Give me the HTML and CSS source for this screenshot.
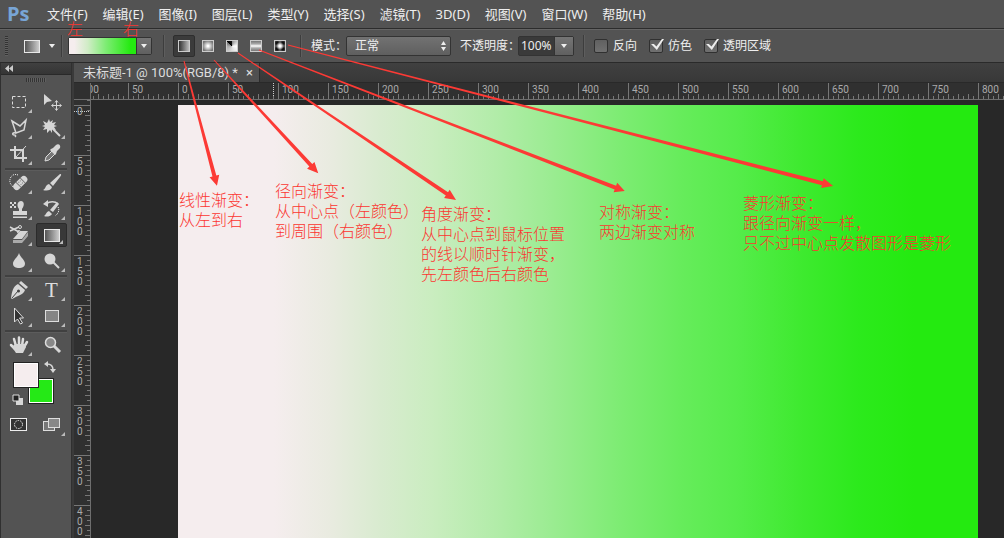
FILE: index.html
```html
<!DOCTYPE html>
<html lang="zh-CN">
<head>
<meta charset="utf-8">
<title>未标题-1</title>
<link rel="stylesheet" href="styles.css">
</head>
<body>
<div class="app">
  <nav class="menubar">
    <span class="logo">Ps</span>
    <button>文件(F)</button><button>编辑(E)</button><button>图像(I)</button><button>图层(L)</button><button>类型(Y)</button><button>选择(S)</button><button>滤镜(T)</button><button>3D(D)</button><button>视图(V)</button><button>窗口(W)</button><button>帮助(H)</button>
  </nav>

  <div class="options">
    <span class="grip"></span>
    <button class="preset" aria-label="工具预设"><span class="chip"></span><span class="caret"></span></button>
    <span class="divider"></span>
    <button class="picker" aria-label="渐变编辑器"><span class="ramp"></span><span class="drop"><span class="caret"></span></span></button>
    <span class="divider"></span>
    <div class="modes">
      <button class="mode active" aria-label="线性渐变"><span class="swatch linear"></span></button>
      <button class="mode" aria-label="径向渐变"><span class="swatch radial"></span></button>
      <button class="mode" aria-label="角度渐变"><span class="swatch angle"></span></button>
      <button class="mode" aria-label="对称渐变"><span class="swatch reflected"></span></button>
      <button class="mode" aria-label="菱形渐变"><span class="swatch diamond"></span></button>
    </div>
    <span class="divider"></span>
    <label class="caption blend-label" for="blend">模式：</label>
    <span class="select-wrap"><select id="blend"><option>正常</option></select>
      <svg class="updown" viewBox="0 0 5 10"><path d="M0 4 2.500 0 5 4zM0 6h5L2.500 10z"/></svg></span>
    <label class="caption opacity-label" for="opacity">不透明度：</label>
    <span class="opacity"><input id="opacity" type="text" value="100%"><button class="drop" aria-label="不透明度滑块"><span class="caret"></span></button></span>
    <span class="divider"></span>
    <label class="check"><input type="checkbox">反向</label>
    <label class="check"><input type="checkbox" checked>仿色</label>
    <label class="check"><input type="checkbox" checked>透明区域</label>
  </div>

  <div class="workspace">
    <aside class="panel">
      <div class="panel-head"><svg viewBox="0 0 8 7"><path d="M4 0v7L0 3.500zM8 0v7L4 3.500z"/></svg></div>
      <div class="panel-grip"></div>
      <div class="tools">
        <button class="tool more" aria-label="选框"><svg viewBox="0 0 26 26"><rect x="6.500" y="7.500" width="13" height="11" fill="none" stroke="#ddd" stroke-dasharray="3 2"/></svg></button>
        <button class="tool" aria-label="移动"><svg viewBox="0 0 26 26"><path class="f" d="M5 5v11l3-3 5-1z"/><path class="s" d="M17.500 12v9M13 16.500h9M16 13.500l1.500-2 1.500 2M16 19.500l1.500 2 1.500-2M14.500 15l-2 1.500 2 1.500M20.500 15l2 1.500-2 1.500"/></svg></button>
        <button class="tool more" aria-label="多边形套索"><svg viewBox="0 0 26 26"><path class="s w" d="M6 6l8 5 6-6-2 10-8 3zM10 18c-4-1-4 2-2 2s2 1 1 2"/></svg></button>
        <button class="tool more" aria-label="魔棒"><svg viewBox="0 0 26 26"><path class="f" d="M10 4l1 3 3-2-1 3 4-1-2 3 3 1-3 1 2 3-4-1v4l-2-3-3 3v-4l-4 1 2-3-3-1 3-1-2-4 4 2z"/><path class="s b" d="M13 13l8 8"/></svg></button>
        <button class="tool more" aria-label="裁剪"><svg viewBox="0 0 26 26"><path class="s b" d="M9 5v12h12M4 9h13v12"/><path class="s" d="M10 16L20 5"/></svg></button>
        <button class="tool more" aria-label="吸管"><svg viewBox="0 0 26 26"><path d="M6 20l1-4 7-7 3 3-7 7z" fill="#777" stroke="#ddd"/><path class="f" d="M12 8l2-1 3-3c3-2 5 1 4 3l-3 3-1 3-1 1-5-5z"/></svg></button>
      </div>
      <div class="tools">
        <button class="tool more" aria-label="修复画笔"><svg viewBox="0 0 26 26"><path d="M12 5c-5-2-9 2-8 8l3 4" fill="none" stroke="#eee" stroke-dasharray="1 1"/><g transform="rotate(-45 15 13)"><rect class="f" x="6" y="9" width="17" height="7" rx="3.500"/><path d="M12 9v7M18 9v7" stroke="#777"/><path d="M13.500 11h4M13.500 14h4" stroke="#777" stroke-dasharray="1 1"/></g></svg></button>
        <button class="tool more" aria-label="画笔"><svg viewBox="0 0 26 26"><path class="f" d="M21 4c2 0 1 2 0 3l-7 9-3-3zM10 14l3 3c-1 4-6 4-9 3 3-1 2-5 6-6z"/></svg></button>
        <button class="tool more" aria-label="仿制图章"><svg viewBox="0 0 26 26"><path class="f" d="M13 13c-3-4-1-8 2-8s4 4 1 8v2h5v4H7v-4h6zM7 20.500h14V22H7z"/><path class="f" d="M4 6h2v2H4zM8 6h2v2H8zM6 8h2v2H6zM4 10h2v2H4zM8 10h2v2H8z"/></svg></button>
        <button class="tool more" aria-label="历史记录画笔"><svg viewBox="0 0 26 26"><path class="s w" d="M7 8c4-3 9-3 12 0"/><path class="f" d="M9 4v7L4 8zM20 8l-6 8-3-2 7-8zM10 15l3 3c-2 3-6 3-8 2 2-1 2-4 5-5z"/><path d="M19 11c2 3 0 7-3 9" fill="none" stroke="#fff" stroke-dasharray="1 1"/></svg></button>
        <button class="tool more" aria-label="背景橡皮擦"><svg viewBox="0 0 26 26"><path class="f" d="M14 9h8l-6 8H7z"/><path d="M7 18h9l6-8v4l-6 7H7z" fill="#aaa"/><path class="s w" d="M4 5l9 5M4 9l9-4"/><circle class="s" cx="14" cy="5" r="1.500"/><circle class="s" cx="13" cy="10" r="1.500"/></svg></button>
        <button class="tool more current" aria-label="渐变"><span class="chip"></span></button>
        <button class="tool more" aria-label="模糊"><svg viewBox="0 0 26 26"><path class="f" d="M13 5c1 4 6 7 6 10.500S16 20 13 20s-6-1-6-4.500S12 9 13 5z"/></svg></button>
        <button class="tool more" aria-label="减淡"><svg viewBox="0 0 26 26"><circle class="f" cx="11" cy="11" r="5.500"/><path class="s b" d="M14 14l6 6"/></svg></button>
      </div>
      <div class="tools">
        <button class="tool more" aria-label="钢笔"><svg viewBox="0 0 26 26"><path class="f" d="M15 4l7 6-2 2-7-6zM12 7l7 6c-2 5-6 5-11 8l-2 1-1-1c1-6 2-12 7-14z"/><path d="M6 21l6-7" stroke="#444"/><circle cx="12.500" cy="14" r="1.500" fill="#444"/></svg></button>
        <button class="tool more letter" aria-label="文字">T</button>
        <button class="tool more" aria-label="路径选择"><svg viewBox="0 0 26 26"><path d="M8.500 5v14l3-3 3 5 2-1-3-5h4z" fill="#333" stroke="#ddd"/></svg></button>
        <button class="tool more" aria-label="矩形"><svg viewBox="0 0 26 26"><rect x="6.500" y="7.500" width="13" height="11" fill="#858585" stroke="#ddd"/></svg></button>
      </div>
      <div class="tools">
        <button class="tool more" aria-label="抓手"><svg viewBox="0 0 26 26"><path d="M9 17l-4-4M10 14L8 7M13 13V5.500M16 14l1-7M18 15l3-5" fill="none" stroke="#ddd" stroke-width="2.500" stroke-linecap="round"/><path class="f" d="M9 12h10l1 3-3 6h-7l-4-6z"/></svg></button>
        <button class="tool" aria-label="缩放"><svg viewBox="0 0 26 26"><path class="s t" d="M15 14l6 6"/><circle cx="11.500" cy="10.500" r="5" fill="#888" stroke="#ddd" stroke-width="1.500"/></svg></button>
      </div>
      <div class="colors">
        <button class="back" aria-label="背景色"></button>
        <button class="fore" aria-label="前景色"></button>
        <button class="swap" aria-label="切换颜色"><svg viewBox="0 0 12 12"><path class="s w" d="M3 3c4 0 6 2 6 6"/><path class="f" d="M4 0v6L0 3zM6 8h6l-3 4z"/></svg></button>
        <button class="reset" aria-label="默认颜色"><svg viewBox="0 0 11 11"><path class="f" d="M4 4h7v7H4z"/><path d="M1 1h6v6H1z" fill="#222" stroke="#ddd"/></svg></button>
      </div>
      <div class="tools">
        <button class="tool" aria-label="快速蒙版"><svg viewBox="0 0 26 26"><rect x="4.500" y="6.500" width="16" height="12" fill="#333" stroke="#eee"/><circle cx="12.500" cy="12.500" r="4" fill="none" stroke="#eee" stroke-dasharray="1.500 1"/></svg></button>
        <button class="tool more" aria-label="屏幕模式"><svg viewBox="0 0 26 26"><rect x="4.500" y="9.500" width="11" height="9" fill="#777" stroke="#ddd"/><rect x="9.500" y="6.500" width="11" height="9" fill="#888" stroke="#ddd"/></svg></button>
      </div>
    </aside>

    <main class="document">
      <div class="tabs"><div class="tab">未标题-1 @ 100%(RGB/8) * <button aria-label="关闭">×</button></div></div>
      <div class="stage">
        <div class="corner"></div>
        <div class="ruler-x"><span>100</span><span>50</span><span>0</span><span>50</span><span>100</span><span>150</span><span>200</span><span>250</span><span>300</span><span>350</span><span>400</span><span>450</span><span>500</span><span>550</span><span>600</span><span>650</span><span>700</span><span>750</span><span>800</span></div>
        <div class="ruler-y"><span>0</span><span>5<br>0</span><span>1<br>0<br>0</span><span>1<br>5<br>0</span><span>2<br>0<br>0</span><span>2<br>5<br>0</span><span>3<br>0<br>0</span><span>3<br>5<br>0</span><span>4<br>0<br>0</span></div>
        <div class="pasteboard"><div class="artboard"></div></div>
      </div>
    </main>
  </div>

  <svg class="arrows">
    <g transform="translate(184 61) rotate(75.200)"><path d="M0-.5L119-2V-5L129 0 119 5V2L0 .5z"/></g>
    <g transform="translate(214 60) rotate(47.400)"><path d="M0-.5L143-2V-5L154 0 143 5V2L0 .5z"/></g>
    <g transform="translate(238 53) rotate(34)"><path d="M0-.5L252-2V-5L263 0 252 5V2L0 .5z"/></g>
    <g transform="translate(259 50) rotate(21.100)"><path d="M0-.5L382-2V-5L392 0 382 5V2L0 .5z"/></g>
    <g transform="translate(288 45) rotate(14.500)"><path d="M0-.5L552-2V-5L563 0 552 5V2L0 .5z"/></g>
  </svg>
  <span class="note n-left">左</span>
  <span class="note n-right">右</span>
  <p class="note n-linear">线性渐变：<br>从左到右</p>
  <p class="note n-radial">径向渐变：<br>从中心点（左颜色）<br>到周围（右颜色）</p>
  <p class="note n-angle">角度渐变：<br>从中心点到鼠标位置<br>的线以顺时针渐变，<br>先左颜色后右颜色</p>
  <p class="note n-reflected">对称渐变：<br>两边渐变对称</p>
  <p class="note n-diamond">菱形渐变：<br>跟径向渐变一样，<br>只不过中心点发散图形是菱形</p>
</div>
</body>
</html>
```
FILE: styles.css
```css
* { box-sizing: border-box; }

body {
  margin: 0;
  background: #282828;
  color: #eee;
  font: 13px/18px "Noto Sans", "Noto Sans CJK SC", sans-serif;
}

button, input, select {
  margin: 0;
  padding: 0;
  border: 0;
  background: none;
  color: inherit;
  font: inherit;
}

.app {
  position: relative;
  display: flex;
  flex-direction: column;
  height: 100vh;
  overflow: hidden;
}

/* Menu bar */
.menubar {
  display: flex;
  align-items: center;
  flex: none;
  height: 29px;
  padding-left: 7px;
  background: #535353;
  border-bottom: 1px solid #2c2c2c;
}
.menubar button { margin-right: 15px; white-space: nowrap; }
.logo {
  width: 40px;
  color: #78a5d6;
  font: bold 20px/26px "Open Sans", sans-serif;
}

/* Options bar */
.options {
  display: flex;
  align-items: center;
  flex: none;
  height: 34px;
  padding-left: 5px;
  background: #535353;
  border-top: 1px solid #656565;
  border-bottom: 1px solid #2a2a2a;
  font-size: 12px;
}
.grip {
  width: 3px;
  height: 20px;
  background: repeating-linear-gradient(#333 0 1px, #606060 1px 2px);
}
.preset { display: flex; align-items: center; gap: 9px; margin: 0 6px 0 16px; }
.chip {
  display: block;
  width: 16px;
  height: 13px;
  border: 1px solid #e8e8e8;
  background: linear-gradient(90deg, #555, #ccc);
}
.caret {
  display: block;
  width: 6px;
  height: 4px;
  background: #eee;
  clip-path: polygon(0 0, 100% 0, 50% 100%);
}
.divider { width: 2px; height: 22px; background: #3d3d3d; border-right: 1px solid #5e5e5e; }
.picker {
  display: flex;
  width: 84px;
  height: 18px;
  margin: 0 11px 0 5px;
  border: 1px solid #333;
  border-radius: 2px;
}
.ramp { flex: 1; background: linear-gradient(90deg, #f5edee 8%, #d0ecc6 28%, #7eec74 55%, #24ea10 92%); }
.drop {
  display: flex;
  align-items: center;
  justify-content: center;
  width: 15px;
  background: linear-gradient(#757575, #606060);
  border-left: 1px solid #333;
}
.modes { display: flex; gap: 2px; margin: 0 9px 0 8px; }
.mode {
  display: flex;
  align-items: center;
  justify-content: center;
  width: 22px;
  height: 22px;
  border-radius: 2px;
}
.mode.active { background: #3b3b3b; border: 1px solid #2e2e2e; }
.swatch { width: 12px; height: 12px; border: 1px solid #ccc; }
.linear { background: linear-gradient(90deg, #333, #bbb); }
.radial { background: radial-gradient(circle, #fff 10%, #777 80%); }
.angle { background: conic-gradient(#888, #fff 25%, #ddd 50%, #aaa 75%, #666 87%, #000 87%, #111); }
.reflected { background: linear-gradient(#777, #aaa 30%, #fff 50%, #aaa 70%, #777); }
.diamond {
  background:
    radial-gradient(circle at 50% 50%, #fff 1px, transparent 4px),
    radial-gradient(circle at 20% 20%, #111 1px, transparent 4px),
    radial-gradient(circle at 80% 20%, #111 1px, transparent 4px),
    radial-gradient(circle at 20% 80%, #111 1px, transparent 4px),
    radial-gradient(circle at 80% 80%, #111 1px, #888 4px);
}
.caption { white-space: nowrap; }
.blend-label { width: 35px; margin-left: 9px; }
.select-wrap { position: relative; display: flex; }
.select-wrap select {
  appearance: none;
  width: 105px;
  height: 20px;
  padding-left: 8px;
  border: 1px solid #333;
  border-radius: 2px;
  background: linear-gradient(#727272, #5f5f5f);
}
.updown { position: absolute; right: 5px; top: 5px; width: 5px; height: 10px; fill: #eee; }
.opacity-label { width: 58px; margin-left: 9px; }
.opacity { display: flex; margin-right: 9px; border: 1px solid #333; border-radius: 2px; background: #3a3a3a; }
.opacity input { width: 35px; height: 18px; padding-left: 2px; }
.opacity .drop { width: 19px; }
.check { display: flex; align-items: center; gap: 5px; margin-right: 12px; white-space: nowrap; }
.divider + .check { margin-left: 9px; }
.check input {
  appearance: none;
  width: 14px;
  height: 14px;
  border: 1px solid #303030;
  border-radius: 2px;
  background: linear-gradient(#606060, #707070);
}
.check input:checked::before {
  content: "";
  display: block;
  width: 13px;
  height: 11px;
  margin: -1px 0 0 1px;
  background: #eee;
  clip-path: polygon(0 45%, 22% 45%, 42% 68%, 84% 0, 100% 0, 45% 100%);
}

/* Workspace and tool panel */
.workspace { display: flex; flex: 1; min-height: 0; background: #3a3a3a; }
.panel {
  flex: none;
  width: 72px;
  background: #535353;
  border: solid #303030;
  border-width: 0 1px;
}
.panel-head {
  height: 12px;
  padding: 2px 4px;
  background: linear-gradient(#404040, #353535);
  border-bottom: 1px solid #292929;
}
.panel-head svg { display: block; width: 8px; height: 7px; fill: #ccc; }
.panel-grip {
  width: 20px;
  height: 4px;
  margin: 3px auto 7px 25px;
  background: repeating-linear-gradient(90deg, #333 0 1px, #606060 1px 2px);
}
.tools {
  display: grid;
  grid-template-columns: 33px 33px;
  grid-auto-rows: 26px;
  margin-left: 1px;
}
.tools + .tools::before {
  content: "";
  grid-column: 1 / 3;
  height: 2px;
  margin: 1px 1px 0 3px;
  background: #404040;
  border-bottom: 1px solid #5c5c5c;
}
.tools + .tools { grid-template-rows: 3px; }
.tool { position: relative; display: flex; align-items: center; justify-content: center; }
.tool svg { width: 26px; height: 26px; }
.tool.more::after {
  content: "";
  position: absolute;
  right: 3px;
  bottom: 2px;
  width: 4px;
  height: 4px;
  background: #bbb;
  clip-path: polygon(100% 0, 100% 100%, 0 100%);
}
.tool.current { margin: 1px; border: 1px solid #2b2b2b; border-radius: 2px; background: #383838; }
.letter { font: 21px/26px "Liberation Serif", serif; color: #ddd; }
.f { fill: #d6d6d6; }
.s { fill: none; stroke: #d6d6d6; }
.w { stroke-width: 1.500; }
.b { stroke-width: 2; }
.t { stroke-width: 3; }

.colors { position: relative; height: 42px; margin: 4px 0 8px 12px; }
.colors button { position: absolute; }
.fore, .back { width: 26px; height: 26px; border: 1px solid #222; box-shadow: inset 0 0 0 1px #fff; }
.fore { left: 0; top: 0; background: #f5edee; }
.back { left: 15px; top: 16px; background: #25e916; }
.swap { left: 31px; top: -1px; width: 12px; height: 12px; }
.reset { left: -1px; top: 32px; width: 11px; height: 11px; }
.colors svg { display: block; width: 100%; height: 100%; }

/* Document window */
.document { display: flex; flex-direction: column; flex: 1; min-width: 0; margin-left: 2px; }
.tabs { flex: none; height: 20px; background: linear-gradient(#404040, #383838); border-bottom: 1px solid #292929; }
.tab {
  display: inline-flex;
  gap: 8px;
  height: 19px;
  padding: 0 6px 0 9px;
  background: #505050;
  border-right: 1px solid #2c2c2c;
  color: #ddd;
  font: 13px/19px Roboto, "Noto Sans CJK SC", sans-serif;
  white-space: nowrap;
}
.stage {
  display: grid;
  grid-template: 17px minmax(0, 1fr) / 17px minmax(0, 1fr);
  flex: 1;
  min-height: 0;
  color: #aaa;
  font: 10px/10px Roboto, sans-serif;
}
.corner { background: #303030; border: solid #6e6e6e; border-width: 0 1px 1px 0; }
.ruler-x {
  display: flex;
  overflow: hidden;
  border-bottom: 1px solid #6e6e6e;
  background:
    linear-gradient(90deg, #777 1px, transparent 1px) 37px 0 / 50px 16px repeat-x,
    linear-gradient(90deg, #777 1px, transparent 1px) 7px 100% / 10px 5px repeat-x,
    linear-gradient(90deg, #777 1px, transparent 1px) 2px 100% / 5px 3px repeat-x,
    repeating-linear-gradient(#ccc 0 1px, transparent 1px 2px) 182px 0 / 1px 16px no-repeat,
    #303030;
}
.ruler-x span { flex: none; width: 50px; padding: 2px 0 0 4px; }
.ruler-x span:first-child { margin-left: -13px; }
.ruler-y {
  overflow: hidden;
  padding-top: 7px;
  border-right: 1px solid #6e6e6e;
  background:
    linear-gradient(#777 1px, transparent 1px) 0 5px / 16px 50px repeat-y,
    linear-gradient(#777 1px, transparent 1px) 100% 5px / 5px 10px repeat-y,
    linear-gradient(#777 1px, transparent 1px) 100% 0 / 3px 5px repeat-y,
    repeating-linear-gradient(90deg, #ccc 0 1px, transparent 1px 2px) 0 11px / 16px 1px no-repeat,
    #303030;
}
.ruler-y span { display: block; height: 50px; padding-left: 3px; }
.pasteboard { display: flex; padding: 5px 26px 0 87px; background: #282828; }
.artboard {
  flex: 1;
  background: linear-gradient(90deg, #f5edee 0 12%, #e9ebe0 19%, #d9ebd0 25%, #c9edbf 32%, #b1eca8 40%, #9dec94 46%, #7eec74 55%, #66ec5b 63%, #55ec4a 70%, #3eea2f 78%, #2cea1c 85%, #24ea10 92%);
}

/* Annotations floating over the window */
.arrows {
  position: absolute;
  left: 0;
  top: 0;
  width: 100%;
  height: 100%;
  fill: #fc3a35;
  pointer-events: none;
}
.note {
  position: absolute;
  margin: 0;
  color: #fb3631;
  font: 300 16px/20px "Noto Sans CJK SC", sans-serif;
  white-space: nowrap;
}
.n-left { left: 67px; top: 18px; }
.n-right { left: 123px; top: 18px; }
.n-linear { left: 179px; top: 189px; }
.n-radial { left: 275px; top: 180px; }
.n-angle { left: 421px; top: 203px; }
.n-reflected { left: 599px; top: 201px; }
.n-diamond { left: 743px; top: 192px; }
```
